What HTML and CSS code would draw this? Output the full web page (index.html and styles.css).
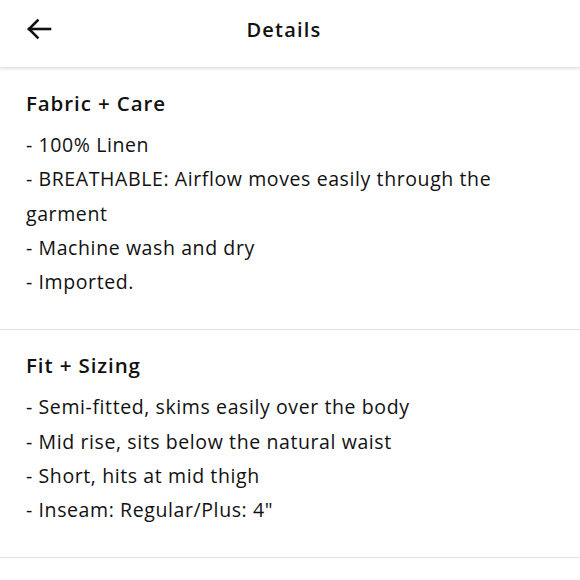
FILE: index.html
```html
<!DOCTYPE html>
<html>
<head>
<meta charset="utf-8">
<link rel="stylesheet" href="styles.css">
</head>
<body>
<header class="topbar">
  <button class="back" aria-label="Back">
    <svg width="26" height="22" viewBox="0 0 26 22" fill="none" stroke="#111" stroke-width="2.6" stroke-linecap="square">
      <path d="M3 11 H24"/>
      <path d="M11.5 2.5 L3 11 L11.5 19.5"/>
    </svg>
  </button>
  <h1 class="title">Details</h1>
</header>
<main>
  <section class="section">
    <h2 class="heading">Fabric + Care</h2>
    <ul class="lines">
      <li>- 100% Linen</li>
      <li>- BREATHABLE: Airflow moves easily through the garment</li>
      <li>- Machine wash and dry</li>
      <li>- Imported.</li>
    </ul>
  </section>
  <section class="section">
    <h2 class="heading">Fit + Sizing</h2>
    <ul class="lines">
      <li>- Semi-fitted, skims easily over the body</li>
      <li>- Mid rise, sits below the natural waist</li>
      <li>- Short, hits at mid thigh</li>
      <li>- Inseam: Regular/Plus: 4"</li>
    </ul>
  </section>
</main>
</body>
</html>
```
FILE: styles.css
```css
* { box-sizing: border-box; }
html, body { margin: 0; padding: 0; background: #fff; }
body {
  font-family: "Open Sans", "Noto Sans", sans-serif;
  color: #111;
  width: 580px;
}
.topbar {
  position: relative;
  height: 68px;
  display: flex;
  align-items: center;
  justify-content: center;
  box-shadow: 0 1px 3px rgba(0,0,0,0.12);
  border-bottom: 1px solid #e6e6e6;
}
.back {
  position: absolute;
  left: 26px;
  top: 17px;
  width: 28px;
  height: 24px;
  padding: 0;
  border: 0;
  background: none;
  display: flex;
  align-items: center;
}
.title {
  margin: -8px 0 0;
  padding-right: 12px;
  font-size: 20px;
  font-weight: 600;
  letter-spacing: 1.2px;
}
.section {
  padding: 20px 26px 30px;
  border-bottom: 1px solid #e2e2e2;
}
.heading {
  margin: 0;
  font-size: 20.5px;
  line-height: 30px;
  font-weight: 600;
  letter-spacing: 0.9px;
}
.lines {
  list-style: none;
  margin: 10px 0 0;
  padding: 0 50px 0 0;
  font-size: 19.5px;
  line-height: 34.25px;
  letter-spacing: 0.6px;
}
```
